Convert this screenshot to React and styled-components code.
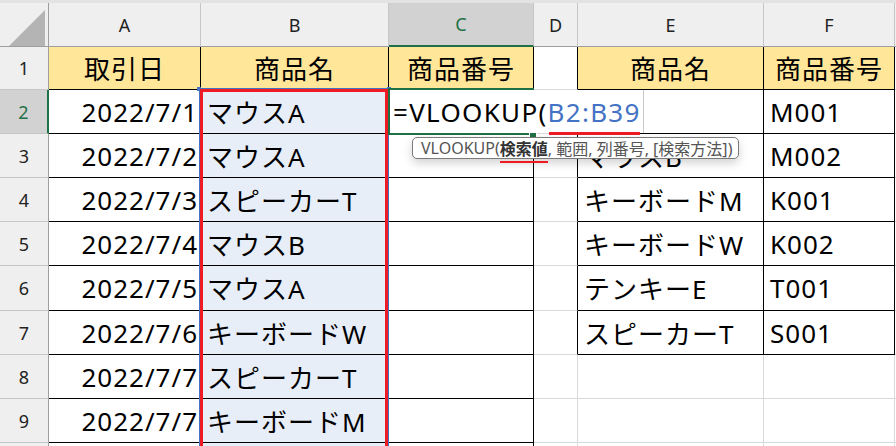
import React from 'react';
import styled, { createGlobalStyle } from 'styled-components';

const GREEN = '#1e7145';
const GRID = '#d9d9d9';
const BLACK = '#000';
const RED = '#ed1c24';
const BLUE = '#4472c4';

const GlobalStyle = createGlobalStyle`
    html, body {
        margin: 0;
        padding: 0;
        background: #fff;
        overflow: hidden;
    }
`;

const Sheet = styled.div`
    position: relative;
    width: 896px;
    height: 446px;
    overflow: hidden;
    background: #fff;
    font-family: "Noto Sans", "Noto Sans CJK JP", sans-serif;
`;

const TopStrip = styled.div`
    height: 3px;
    background: #e3e3e3;
`;

const Grid = styled.div`
    display: grid;
    grid-template-columns: 49px 152px 188px 145px 44px 186px 131px 1fr;
    grid-template-rows: 44px 43px 44px 44px 44px 44px 45px 44px 44px 44px 44px;
`;

const ColHead = styled.div`
    box-sizing: border-box;
    display: flex;
    align-items: center;
    justify-content: center;
    background: ${(p) => (p.$active ? '#d2d2d2' : '#efefef')};
    color: ${(p) => (p.$active ? GREEN : '#222')};
    border-right: 1px solid #c6c6c6;
    border-bottom: ${(p) => (p.$active ? `2px solid ${GREEN}` : '1px solid #9e9e9e')};
    font-size: 18px;
`;

const Corner = styled.div`
    box-sizing: border-box;
    position: relative;
    background: #efefef;
    border-right: 1px solid #9e9e9e;
    border-bottom: 1px solid #9e9e9e;
`;

const CornerMark = styled.span`
    position: absolute;
    left: 9px;
    top: 7px;
    width: 36px;
    height: 36px;
    background: #b4b4b4;
    clip-path: polygon(100% 0, 100% 100%, 0 100%);
`;

const RowHead = styled.div`
    box-sizing: border-box;
    display: flex;
    align-items: center;
    justify-content: center;
    background: ${(p) => (p.$active ? '#d2d2d2' : '#efefef')};
    color: ${(p) => (p.$active ? GREEN : '#222')};
    border-right: ${(p) => (p.$active ? `2px solid ${GREEN}` : '1px solid #9e9e9e')};
    border-bottom: 1px solid #c6c6c6;
    font-size: 18px;
`;

const Cell = styled.div`
    box-sizing: border-box;
    display: flex;
    align-items: center;
    justify-content: ${(p) => p.$align || 'flex-start'};
    padding: 0 ${(p) => (p.$align === 'flex-end' ? '2px' : '0')} 0 ${(p) => (p.$align === 'flex-start' || !p.$align ? '6px' : '0')};
    background: ${(p) => p.$fill || '#fff'};
    border-right: 1px solid ${(p) => p.$right || GRID};
    border-bottom: 1px solid ${(p) => p.$bottom || GRID};
    font-size: 26px;
    letter-spacing: 1px;
    color: #000;
    white-space: nowrap;
    overflow: hidden;
`;

const RangeOutline = styled.div`
    position: absolute;
    left: 199px;
    top: 88px;
    width: 190px;
    height: 400px;
    box-sizing: border-box;
    border: 1px solid ${BLUE};
`;

const Handle = styled.span`
    position: absolute;
    top: -2px;
    ${(p) => (p.$side === 'right' ? 'right: -3px;' : 'left: -3px;')}
    width: 4px;
    height: 4px;
    background: ${BLUE};
`;

const RedBox = styled.div`
    position: absolute;
    left: 200px;
    top: 89px;
    width: 188px;
    height: 400px;
    box-sizing: border-box;
    border: 3px solid ${RED};
`;

const ActiveCell = styled.div`
    position: absolute;
    left: 388px;
    top: 88px;
    width: 146px;
    height: 47px;
    box-sizing: border-box;
    border: 2px solid ${GREEN};
`;

const FillHandle = styled.span`
    position: absolute;
    right: -5px;
    bottom: -5px;
    width: 6px;
    height: 6px;
    background: ${GREEN};
    border: 1px solid #fff;
`;

const EditBox = styled.div`
    position: absolute;
    left: 390px;
    top: 90px;
    width: 254px;
    height: 43px;
    box-sizing: border-box;
    background: #fff;
    border-right: 1px solid #c8c8c8;
    display: flex;
    align-items: center;
    padding-left: 3px;
    font-size: 26px;
    letter-spacing: 1.3px;
    color: #000;
    white-space: nowrap;
`;

const RefText = styled.span`
    position: relative;
    color: ${BLUE};

    &::after {
        content: '';
        position: absolute;
        left: 1px;
        right: 1px;
        bottom: -5px;
        height: 3px;
        background: ${RED};
    }
`;

const Tooltip = styled.div`
    position: absolute;
    left: 412px;
    top: 137px;
    height: 22px;
    box-sizing: border-box;
    padding: 0 6px 0 8px;
    display: flex;
    align-items: center;
    background: #fff;
    border: 1px solid #7a7a7a;
    border-radius: 5px;
    box-shadow: 0 4px 10px rgba(0, 0, 0, 0.18);
    font-size: 16px;
    color: #555;
    white-space: nowrap;
`;

const ArgCurrent = styled.b`
    position: relative;
    color: #333;
    font-weight: 700;

    &::after {
        content: '';
        position: absolute;
        left: 0;
        right: 0;
        bottom: -3px;
        height: 2px;
        background: ${RED};
    }
`;

const letters = ['A', 'B', 'C', 'D', 'E', 'F', ''];

const rows = [
    { a: '取引日', b: '商品名', c: '商品番号', e: '商品名', f: '商品番号' },
    { a: '2022/7/1', b: 'マウスA', e: '', f: 'M001' },
    { a: '2022/7/2', b: 'マウスA', e: 'マウスB', f: 'M002' },
    { a: '2022/7/3', b: 'スピーカーT', e: 'キーボードM', f: 'K001' },
    { a: '2022/7/4', b: 'マウスB', e: 'キーボードW', f: 'K002' },
    { a: '2022/7/5', b: 'マウスA', e: 'テンキーE', f: 'T001' },
    { a: '2022/7/6', b: 'キーボードW', e: 'スピーカーT', f: 'S001' },
    { a: '2022/7/7', b: 'スピーカーT' },
    { a: '2022/7/7', b: 'キーボードM' },
    { a: '', b: '' },
];

const HEAD_FILL = '#ffe699';
const RANGE_FILL = '#e8eef8';

function SheetRow({ row, index }) {
    const n = index + 1;
    const head = n === 1;
    const lookup = n <= 7;
    const center = head ? 'center' : undefined;
    return (
        <>
            <RowHead $active={n === 2}>{n}</RowHead>
            <Cell $fill={head ? HEAD_FILL : undefined} $right={BLACK} $bottom={BLACK} $align={head ? 'center' : 'flex-end'}>
                {row.a}
            </Cell>
            <Cell $fill={head ? HEAD_FILL : RANGE_FILL} $right={BLACK} $bottom={BLACK} $align={center}>
                {row.b}
            </Cell>
            <Cell $fill={head ? HEAD_FILL : undefined} $right={BLACK} $bottom={BLACK} $align={center}>
                {row.c}
            </Cell>
            <Cell $right={lookup ? BLACK : GRID} />
            <Cell $fill={head ? HEAD_FILL : undefined} $right={lookup ? BLACK : GRID} $bottom={lookup ? BLACK : GRID} $align={center}>
                {row.e}
            </Cell>
            <Cell $fill={head ? HEAD_FILL : undefined} $right={lookup ? BLACK : GRID} $bottom={lookup ? BLACK : GRID} $align={center}>
                {row.f}
            </Cell>
            <Cell />
        </>
    );
}

export default function App() {
    return (
        <>
            <GlobalStyle />
            <Sheet>
                <TopStrip />
                <Grid>
                    <Corner>
                        <CornerMark />
                    </Corner>
                    {letters.map((l, i) => (
                        <ColHead key={i} $active={l === 'C'}>
                            {l}
                        </ColHead>
                    ))}
                    {rows.map((row, i) => (
                        <SheetRow key={i} row={row} index={i} />
                    ))}
                </Grid>

                {/* formula range highlight and annotation frame over column B */}
                <RangeOutline>
                    <Handle />
                    <Handle $side="right" />
                </RangeOutline>
                <ActiveCell>
                    <FillHandle />
                </ActiveCell>
                <EditBox>
                    =VLOOKUP(<RefText>B2:B39</RefText>
                </EditBox>
                <RedBox />

                <Tooltip>
                    VLOOKUP(<ArgCurrent>検索値</ArgCurrent>, 範囲, 列番号, [検索方法])
                </Tooltip>
            </Sheet>
        </>
    );
}
